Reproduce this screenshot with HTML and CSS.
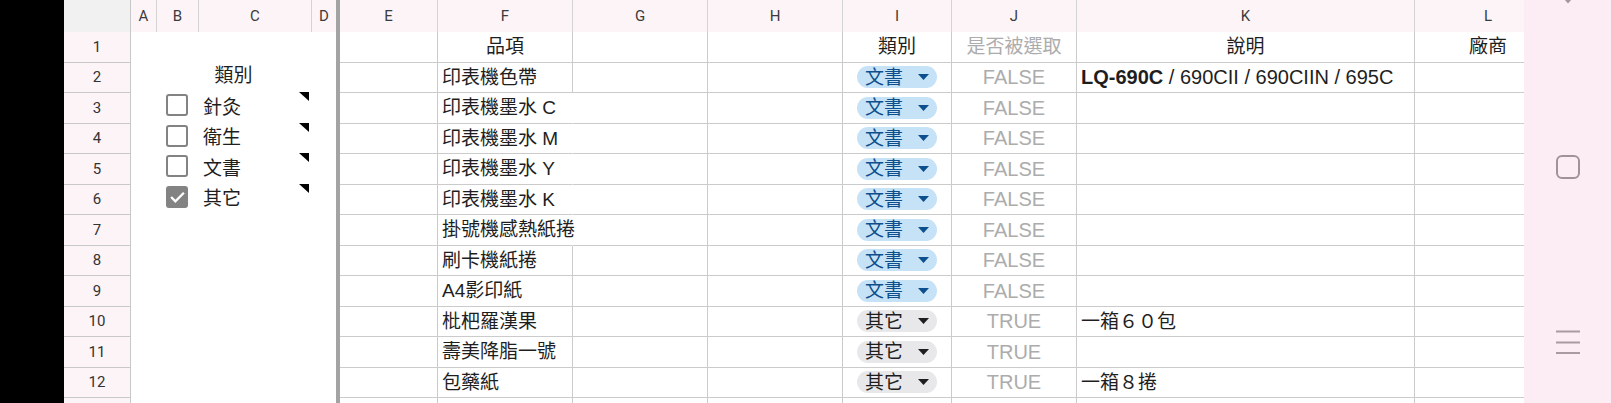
FILE: index.html
```html
<!DOCTYPE html>
<html lang="zh-Hant">
<head>
  <meta charset="UTF-8">
  <meta name="viewport" content="width=device-width, initial-scale=1.0">
  <title>耗材清單</title>
  <link rel="stylesheet" href="styles.css">
</head>
<body>
  <div class="screen">
    <div class="edge"></div>

    <div class="sheet" id="sheet">
      <div class="freeze"></div>

      <!-- A1:D13 合併儲存格，放類別篩選 -->
      <div class="filter">
        <div class="filter-title">類別</div>
        <div class="option"><span class="box"></span><span class="label">針灸</span></div>
        <div class="option"><span class="box"></span><span class="label">衛生</span></div>
        <div class="option"><span class="box"></span><span class="label">文書</span></div>
        <div class="option">
          <span class="box on">
            <svg viewBox="0 0 16 16" width="17" height="17"><path d="M2 8.5l4 4 8-8" fill="none" stroke="#fff" stroke-width="2.2"/></svg>
          </span>
          <span class="label">其它</span>
        </div>
      </div>

      <div class="corner"></div>
      <div class="head">A</div>
      <div class="head">B</div>
      <div class="head">C</div>
      <div class="head last">D</div>
      <div class="head">E</div>
      <div class="head">F</div>
      <div class="head">G</div>
      <div class="head">H</div>
      <div class="head">I</div>
      <div class="head">J</div>
      <div class="head">K</div>
      <div class="head">L</div>
    </div>

    <div class="navbar">
      <svg class="nav-icon" viewBox="0 0 24 24" width="24" height="24"><path d="M5 14l7 8 7-8" fill="none" stroke="#a597a0" stroke-width="2" stroke-linecap="round"/></svg>
      <svg class="nav-icon" viewBox="0 0 24 24" width="24" height="24"><rect x="1" y="1" width="22" height="22" rx="5" fill="none" stroke="#a0929b" stroke-width="2"/></svg>
      <svg class="nav-icon" viewBox="0 0 24 24" width="24" height="24"><path d="M0 1.5h24M0 12.5h24M0 23h24" stroke="#a99ba4" stroke-width="2"/></svg>
    </div>
  </div>

  <script>
    // 每列：品項, 類別, 是否被選取, 說明
    const rows = [
      ['印表機色帶', '文書', 'FALSE', '<span class="latin"><b>LQ-690C</b> / 690CII / 690CIIN / 695C</span>'],
      ['印表機墨水 C', '文書', 'FALSE', ''],
      ['印表機墨水 M', '文書', 'FALSE', ''],
      ['印表機墨水 Y', '文書', 'FALSE', ''],
      ['印表機墨水 K', '文書', 'FALSE', ''],
      ['掛號機感熱紙捲', '文書', 'FALSE', ''],
      ['刷卡機紙捲', '文書', 'FALSE', ''],
      ['A4影印紙', '文書', 'FALSE', ''],
      ['枇杷羅漢果', '其它', 'TRUE', '一箱６０包'],
      ['壽美降脂一號', '其它', 'TRUE', ''],
      ['包藥紙', '其它', 'TRUE', '一箱８捲'],
      ['', '', '', '']
    ];

    const sheet = document.getElementById('sheet');
    const caret = '<svg viewBox="0 0 11 6" width="11" height="6"><path d="M0 0h11L5.5 6z" fill="currentColor"/></svg>';

    function addCell(cls, html) {
      const div = document.createElement('div');
      div.className = cls;
      div.innerHTML = html;
      sheet.appendChild(div);
    }

    function addRow(num, cells) {
      addCell('rowno', num);
      cells.forEach(([cls, html]) => addCell('cell ' + cls, html));
    }

    addRow(1, [
      ['', ''], ['c', '品項'], ['', ''], ['', ''],
      ['c', '類別'], ['c grey', '是否被選取'], ['c', '說明'], ['c', '廠商']
    ]);

    rows.forEach((r, i) => {
      const [item, type, picked, note] = r;
      let pill = '';
      if (type) {
        pill = '<span class="pill ' + (type === '文書' ? 'doc' : 'misc') + '">' + type + caret + '</span>';
      }
      // 第 13 列只露出上緣，列號看不到
      const num = i + 2 < 13 ? i + 2 : '';
      addRow(num, [
        ['', ''],
        [item.length > 6 ? 'spill' : '', item],
        ['', ''], ['', ''],
        ['c', pill],
        ['c grey latin', picked],
        ['', note],
        ['', '']
      ]);
    });
  </script>
</body>
</html>
```

FILE: styles.css
```css
* {
  box-sizing: border-box;
}

body {
  margin: 0;
  background-color: #000;
  font-family: "Liberation Sans", "Noto Sans CJK TC", sans-serif;
  color: #1e1e1e;
}

.screen {
  display: flex;
  width: 1611px;
  height: 403px;
  overflow: hidden;
}

.edge {
  flex: none;
  width: 64px;
  background-color: #000;
}

.sheet {
  flex: none;
  width: 1460px;
  height: 403px;
  display: grid;
  grid-template-columns: 67px 26px 42px 113px 24px 4px 98px 135px 135px 135px 109px 125px 338px 147px;
  grid-template-rows: 32px repeat(13, 30.5px);
  background-color: #fff;
  overflow: hidden;
}

/* 凍結窗格分隔線 */
.freeze {
  grid-column: 6;
  grid-row: 1 / -1;
  background-color: #a3a3a3;
}

.corner {
  background-color: #f1f1f1;
  border-right: 1px solid #c8c8c8;
}

.head {
  display: flex;
  align-items: center;
  justify-content: center;
  background-color: #fdf4f7;
  border-right: 1px solid #d4d4d4;
  font-family: Roboto, sans-serif;
  font-size: 15px;
  color: #3b3b3b;
}

.head.last {
  border-right: none;
}

.rowno {
  display: flex;
  align-items: center;
  justify-content: center;
  background-color: #fdf4f7;
  border-right: 1px solid #c8c8c8;
  border-bottom: 1px solid #c8c8c8;
  font-family: Roboto, sans-serif;
  font-size: 15px;
  color: #333;
}

.cell {
  display: flex;
  align-items: center;
  padding: 0 4px;
  border-right: 1px solid #cbcbcb;
  border-bottom: 1px solid #cbcbcb;
  font-size: 19px;
  white-space: nowrap;
  line-height: 1;
}

.cell.c {
  justify-content: center;
}

.cell.grey {
  color: #acacac;
}

/* 純英數字的內容略大一點 */
.latin {
  font-size: 20px;
}

/* 文字溢出到右邊格子時，隱藏格線 */
.cell.spill {
  border-right-color: transparent;
}

.pill {
  display: inline-flex;
  align-items: center;
  justify-content: space-between;
  width: 80px;
  height: 22px;
  padding: 0 8px;
  border-radius: 11px;
  font-size: 19px;
}

.pill.doc {
  background-color: #c5e2f6;
  color: #0d4f8d;
}

.pill.misc {
  background-color: #e8e8eb;
  color: #1e1e1e;
}

/* 類別篩選 */
.filter {
  grid-column: 2 / 6;
  grid-row: 2 / -1;
  padding-top: 27.5px;
  background-color: #fff;
}

.filter-title {
  height: 30.5px;
  display: flex;
  align-items: center;
  justify-content: center;
  padding-bottom: 2px;
  font-size: 19px;
}

.option {
  position: relative;
  height: 30.5px;
  display: flex;
  align-items: center;
  padding-left: 35px;
}

/* 儲存格附註的小三角 */
.option::after {
  content: "";
  position: absolute;
  top: 2px;
  right: 27px;
  border-top: 9px solid #000;
  border-left: 10px solid transparent;
}

.box {
  display: flex;
  align-items: center;
  justify-content: center;
  width: 22px;
  height: 22px;
  border: 2.5px solid #838383;
  border-radius: 3px;
}

.box.on {
  background-color: #838383;
}

.label {
  margin-left: 15px;
  font-size: 19px;
}

.navbar {
  flex: none;
  width: 87px;
  display: flex;
  flex-direction: column;
  align-items: center;
  gap: 151px;
  background-color: #fcedf4;
}

.nav-icon {
  flex: none;
}

.nav-icon:first-child {
  margin-top: -20px;
}
```
